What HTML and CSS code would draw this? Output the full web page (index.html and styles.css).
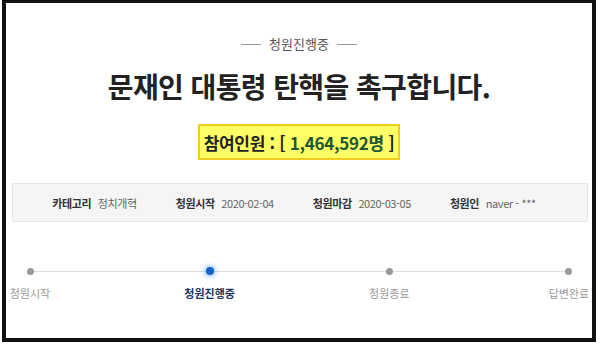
FILE: index.html
```html
<!DOCTYPE html>
<html lang="ko">

<head>
  <meta charset="UTF-8">
  <meta name="viewport" content="width=device-width, initial-scale=1.0">
  <title>청원진행중</title>
  <link rel="stylesheet" href="styles.css">
</head>

<body>
  <div class="frame">
    <p class="status"><span class="dash"></span>청원진행중<span class="dash"></span></p>
    <h1 class="title">문재인 대통령 탄핵을 촉구합니다.</h1>

    <div class="count-wrap">
      <div class="count">참여인원 : [ <span class="num">1,464,592명</span> ]</div>
    </div>

    <ul class="info">
      <li><strong>카테고리</strong> 정치개혁</li>
      <li><strong>청원시작</strong> 2020-02-04</li>
      <li><strong>청원마감</strong> 2020-03-05</li>
      <li><strong>청원인</strong> naver - ***</li>
    </ul>

    <ol class="steps">
      <li class="step"><span class="dot"></span><span class="label">청원시작</span></li>
      <li class="step active"><span class="dot"></span><span class="label">청원진행중</span></li>
      <li class="step"><span class="dot"></span><span class="label">청원종료</span></li>
      <li class="step"><span class="dot"></span><span class="label">답변완료</span></li>
    </ol>
  </div>
</body>

</html>
```

FILE: styles.css
```css
/* 청원 상세 상단 영역 */
body {
  margin: 0;
  background-color: #fff;
  font-family: 'Noto Sans CJK KR', 'Noto Sans', sans-serif;
  color: #222;
}

.frame {
  box-sizing: border-box;
  width: 594px;
  height: 342px;
  margin-left: 2px;
  border: 4px solid #111;
  border-top-width: 3px;
  background-color: #fff;
}

.status {
  display: flex;
  justify-content: center;
  align-items: center;
  gap: 8px;
  margin: 0;
  padding-top: 32px;
  font-size: 13px;
  line-height: 18px;
  color: #555;
}

.status .dash {
  width: 20px;
  height: 1px;
  background-color: #999;
}

.title {
  margin: 13px 0 0;
  text-align: center;
  font-size: 28px;
  line-height: 40px;
  font-weight: 700;
  color: #222;
  letter-spacing: -0.6px;
}

.count-wrap {
  display: flex;
  justify-content: center;
  margin-top: 18px;
}

.count {
  box-sizing: border-box;
  height: 36px;
  padding: 0 4px;
  display: flex;
  align-items: center;
  background-color: #ffff66;
  border: 2px solid #f0cc1c;
  font-size: 17px;
  font-weight: 700;
  color: #222;
  letter-spacing: -0.3px;
  white-space: pre;
}

.count .num {
  color: #1d5632;
}

.info {
  box-sizing: border-box;
  display: flex;
  justify-content: center;
  gap: 39px;
  height: 39px;
  margin: 23px 4px 0 6px;
  padding: 0 12px 0 0;
  align-items: center;
  list-style: none;
  background-color: #f5f5f5;
  border: 1px solid #e4e4e4;
  border-radius: 2px;
  font-size: 11px;
  color: #666;
  letter-spacing: -0.4px;
}

.info strong {
  margin-right: 4px;
  font-weight: 700;
  color: #333;
}

.steps {
  display: flex;
  justify-content: space-between;
  margin: 44px 0 0;
  padding: 0 1px 0 2px;
  list-style: none;
  background: linear-gradient(#ddd, #ddd) no-repeat 24px 5px;
  background-size: calc(100% - 47px) 1px;
}

.step {
  width: 44px;
  display: flex;
  flex-direction: column;
  align-items: center;
}

.dot {
  width: 7px;
  height: 7px;
  margin-top: 2px;
  border-radius: 50%;
  background-color: #999;
}

.label {
  margin-top: 10px;
  white-space: nowrap;
  font-size: 11px;
  line-height: 16px;
  color: #9a9a9a;
}

.step.active .dot {
  width: 8px;
  height: 8px;
  margin-top: 1px;
  background-color: #1463c9;
  box-shadow: 0 0 4px 2px rgba(60, 140, 255, 0.45);
}

.step.active .label {
  font-weight: 700;
  color: #1c3561;
}
```
